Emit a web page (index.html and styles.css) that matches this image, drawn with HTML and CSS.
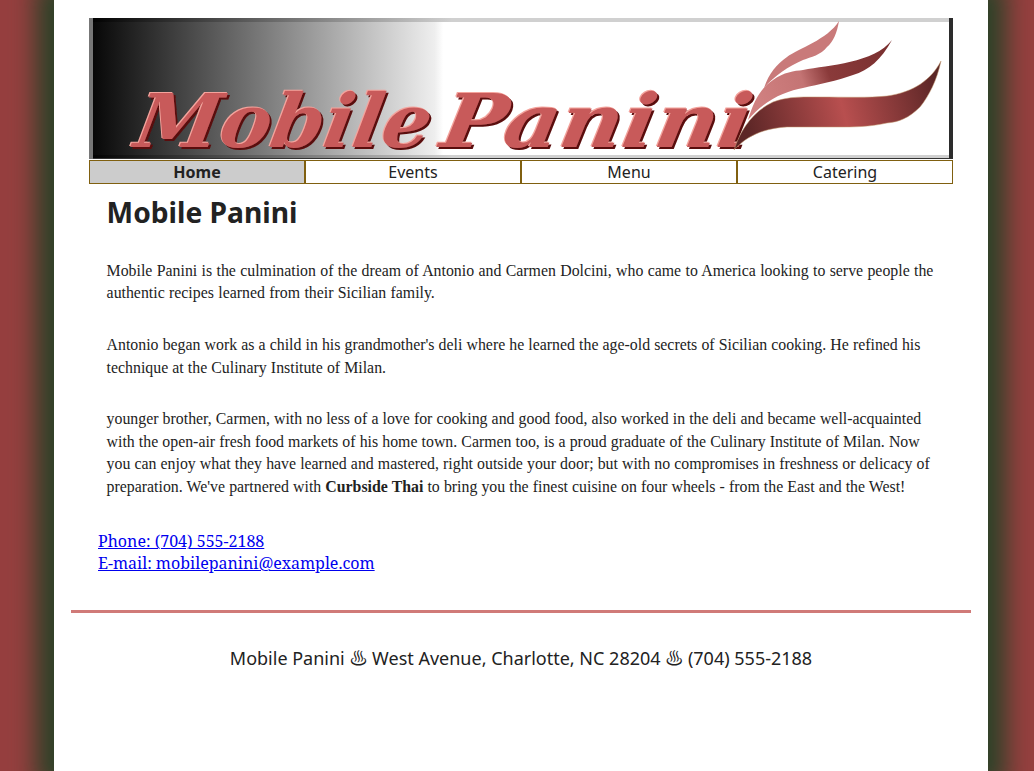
FILE: index.html
```html
<!DOCTYPE html>
<html lang="en">
<head>
<meta charset="utf-8">
<title>Mobile Panini</title>
<link rel="stylesheet" href="styles.css">
</head>
<body>
<div class="wrapper">
  <header class="banner">
    <svg class="logo" viewBox="0 0 864 141" width="864" height="141" xmlns="http://www.w3.org/2000/svg">
      <defs>
        <linearGradient id="bg" x1="0" y1="0" x2="1" y2="0">
          <stop offset="0" stop-color="#050505"/>
          <stop offset="0.4" stop-color="#eee"/>
          <stop offset="0.41" stop-color="#fff"/>
          <stop offset="1" stop-color="#fff"/>
        </linearGradient>
        <linearGradient id="edge" x1="0" y1="0" x2="1" y2="0">
          <stop offset="0" stop-color="#000"/>
          <stop offset="0.42" stop-color="#d0d0d0"/>
          <stop offset="1" stop-color="#d0d0d0"/>
        </linearGradient>
        <linearGradient id="s1" gradientUnits="userSpaceOnUse" x1="660" y1="120" x2="850" y2="70">
          <stop offset="0" stop-color="#5c2626"/>
          <stop offset="0.5" stop-color="#b84f4f"/>
          <stop offset="1" stop-color="#5a2525"/>
        </linearGradient>
        <linearGradient id="s2" gradientUnits="userSpaceOnUse" x1="670" y1="85" x2="800" y2="40">
          <stop offset="0" stop-color="#d08080"/>
          <stop offset="0.35" stop-color="#c47474"/>
          <stop offset="0.55" stop-color="#8a3a3a"/>
          <stop offset="1" stop-color="#7a3030"/>
        </linearGradient>
        <filter id="bevel" x="-5%" y="-10%" width="110%" height="120%">
          <feFlood flood-color="#5a0c0c" result="dark"/>
          <feOffset in="SourceAlpha" dx="1.6" dy="1.8" result="o1"/>
          <feComposite in="dark" in2="o1" operator="in" result="shadow"/>
          <feFlood flood-color="#f4a39c" result="light"/>
          <feOffset in="SourceAlpha" dx="-1" dy="-1" result="o2"/>
          <feComposite in="light" in2="o2" operator="in" result="hi"/>
          <feMerge>
            <feMergeNode in="shadow"/>
            <feMergeNode in="hi"/>
            <feMergeNode in="SourceGraphic"/>
          </feMerge>
        </filter>
      </defs>
      <rect width="864" height="141" fill="url(#bg)"/>
      <rect width="864" height="4" fill="url(#edge)"/>
      <rect y="137" width="864" height="3" fill="url(#edge)"/>
      <rect y="140" width="864" height="1" fill="#333"/>
      <rect width="4" height="141" fill="#777"/>
      <rect x="860" width="4" height="141" fill="#2c2c2c"/>
      <g filter="url(#bevel)">
        <text class="logo-text" x="66" y="129" textLength="295" lengthAdjust="spacingAndGlyphs" transform="skewX(-10)">Mobile</text>
        <text class="logo-text" x="372" y="129" textLength="309" lengthAdjust="spacingAndGlyphs" transform="skewX(-10)">Panini</text>
      </g>
      <path d="M645 132C652 110 665 93 684 84C700 78 715 79 731 79C755 79 780 80 798 78C825 74 842 62 852 43C848 62 840 78 831 89C820 100 810 104 798 105C780 109 765 109 748 109L698 109C680 110 660 115 645 132Z" fill="url(#s1)" stroke="#c49a70" stroke-width=".5"/>
      <path d="M659 102C665 82 672 70 684 62C695 54 705 53 714 52C740 47 785 45 803 22C792 42 780 52 764 57C748 63 730 66 714 70C697 73 675 82 659 102Z" fill="url(#s2)"/>
      <path d="M675 70C680 55 688 46 698 39C710 30 738 22 750 3C748 15 744 24 738 29C732 37 722 39 714 42C700 48 685 58 675 70Z" fill="#c97a7a"/>
    </svg>
  </header>
  <nav class="nav">
    <a class="nav-item active">Home</a>
    <a class="nav-item">Events</a>
    <a class="nav-item">Menu</a>
    <a class="nav-item">Catering</a>
  </nav>
  <main class="content">
    <h1>Mobile Panini</h1>
    <p class="intro">Mobile Panini is the culmination of the dream of Antonio and Carmen Dolcini, who came to America looking to serve people the authentic recipes learned from their Sicilian family.</p>
    <p class="history">Antonio began work as a child in his grandmother's deli where he learned the age-old secrets of Sicilian cooking. He refined his technique at the Culinary Institute of Milan.</p>
    <p class="today">younger brother, Carmen, with no less of a love for cooking and good food, also worked in the deli and became well-acquainted with the open-air fresh food markets of his home town. Carmen too, is a proud graduate of the Culinary Institute of Milan. Now you can enjoy what they have learned and mastered, right outside your door; but with no compromises in freshness or delicacy of preparation. We've partnered with <strong>Curbside Thai</strong> to bring you the finest cuisine on four wheels - from the East and the West!</p>
  </main>
  <div class="contact">
    <a href="#">Phone: (704) 555-2188</a><br>
    <a href="#">E-mail: mobilepanini@example.com</a>
  </div>
  <hr class="rule">
  <footer class="footer">Mobile Panini ♨ West Avenue, Charlotte, NC 28204 ♨ (704) 555-2188</footer>
</div>
</body>
</html>
```
FILE: styles.css
```css
html, body { height: 100%; }
body {
  margin: 0;
  background: #963f3f;
  color: #222;
  overflow: hidden;
}
.wrapper {
  width: 934px;
  min-height: 771px;
  margin: 0 0 0 54px;
  padding: 18px 17px 0;
  box-sizing: border-box;
  background: #fff;
  box-shadow: 0 0 24px 18px #2c4228;
}
.banner {
  width: 864px;
  height: 141px;
  margin: 0 auto;
}
.logo { display: block; overflow: visible; }
.logo-text {
  font-family: "DejaVu Serif", serif;
  font-style: italic;
  font-weight: bold;
  font-size: 74px;
  fill: #c85a5a;
}
.nav {
  display: flex;
  width: 864px;
  margin: 1px auto 0;
  font-family: "Noto Sans", sans-serif;
  font-size: 16px;
}
.nav-item {
  flex: 1;
  height: 24px;
  line-height: 23px;
  box-sizing: border-box;
  border: 1px solid #806010;
  text-align: center;
  color: #222;
}
.nav-item.active { background: #ccc; font-weight: bold; }
.content {
  padding: 0 36px 0 35.6px;
  font-family: "Liberation Serif", serif;
  font-size: 15.85px;
  line-height: 22.4px;
}
.content h1 {
  margin: 9px 0 28.9px;
  font-family: "Noto Sans", sans-serif;
  font-size: 28.2px;
  line-height: 38px;
}
.content p { margin: 0 0 29.4px; }
.content .intro { word-spacing: .4px; }
.content .history { word-spacing: .15px; }
.content .today { word-spacing: .14px; }
.contact {
  margin: 32.5px 0 0 27px;
  font-family: "Noto Serif", "DejaVu Serif", serif;
  font-size: 16px;
  line-height: 22px;
}
.contact a { color: #00e; }
.rule {
  height: 3px;
  margin: 35.6px 0 0;
  border: 0;
  background: #d07a78;
}
.footer {
  margin-top: 33px;
  text-align: center;
  font-family: "Noto Sans", "Noto Sans CJK JP", sans-serif;
  font-size: 18px;
  line-height: 24px;
}
```
